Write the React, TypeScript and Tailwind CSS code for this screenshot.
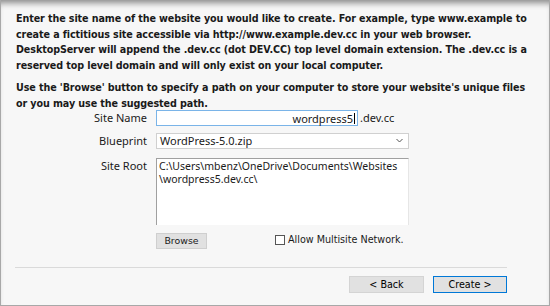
import React from 'react';

const ui = "font-['Noto_Sans',sans-serif]";
const verdana = "font-['DejaVu_Sans',sans-serif]";

export default function App() {
  return (
    <div className="w-[550px] h-[306px] bg-[#f7f7f7] border-x border-b border-[#a8a8a8] shadow-[inset_0_7px_6px_-4px_rgba(0,0,0,0.45)] flex flex-col overflow-hidden">
      <div className={`${verdana} px-[15px] pt-[11px] font-bold text-[9.6px] tracking-[-0.1px] leading-[15.5px] text-[#1a1a1a]`}>
        <p>
          Enter the site name of the website you would like to create. For example, type www.example to create a
          fictitious site accessible via http://www.example.dev.cc in your web browser. DesktopServer will append the
          .dev.cc (dot DEV.CC) top level domain extension. The .dev.cc is a reserved top level domain and will only
          exist on your local computer.
        </p>
        <p className="mt-[7px]">
          Use the 'Browse' button to specify a path on your computer to store your website's unique files or you may use
          the suggested path.
        </p>
      </div>

      <div className={`${ui} text-[11px] text-[#1a1a1a] grid grid-cols-[131px_1fr] gap-x-[9px] pl-[15px] mt-[-1px]`}>
        <label className="text-right leading-[16px]">Site Name</label>
        <div className="flex items-center gap-[2px]">
          <div className="w-[202px] h-[16px] border border-[#7ab4e8] bg-white flex items-center justify-end pr-[2px] leading-none">
            wordpress5<span className="w-px h-[11px] bg-black ml-px" />
          </div>
          <span>.dev.cc</span>
        </div>

        <label className="text-right leading-[16px] mt-[6px]">Blueprint</label>
        <div className="mt-[6px] w-[253px] h-[16px] border border-[#d0d0d0] bg-white flex items-center justify-between px-[3px] leading-none">
          <span>WordPress-5.0.zip</span>
          <svg width="7" height="5" viewBox="0 0 7 5" className="mr-[2px]">
            <path d="M0.5 1 L3.5 4 L6.5 1" fill="none" stroke="#555" strokeWidth="1" />
          </svg>
        </div>

        <label className="text-right leading-[16px] mt-[9px]">Site Root</label>
        <div className="mt-[9px] w-[253px] h-[67px] bg-white border-t border-l border-[#a0a0a0] border-r border-r-[#e6e6e6] px-[2px] pt-[1px] text-[10.5px] leading-[13px] whitespace-nowrap overflow-hidden">
          C:\Users\mbenz\OneDrive\Documents\Websites
          <br />
          \wordpress5.dev.cc\
        </div>

        <div />
        <div className="mt-[8px] flex items-center">
          <button className={`${verdana} w-[51px] h-[16px] bg-[#e1e1e1] border border-[#cfcfcf] text-[9.4px] leading-none`}>
            Browse
          </button>
          <label className={`${verdana} ml-[68px] flex items-center gap-[3px] text-[9.6px]`}>
            <span className="w-[10px] h-[10px] border border-[#555] bg-white" />
            Allow Multisite Network.
          </label>
        </div>
      </div>

      <div className="mt-auto ml-[14px] mr-[42px] border-t border-[#dadada]" />
      <div className={`${verdana} text-[9.6px] flex justify-end gap-[9px] pr-[42px] pt-[8px] pb-[12px]`}>
        <button className="w-[75px] h-[17px] bg-[#e1e1e1] border border-[#d4d4d4] leading-none">&lt; Back</button>
        <button className="w-[74px] h-[17px] bg-[#e1e1e1] border border-[#0078d7] leading-none">Create &gt;</button>
      </div>
    </div>
  );
}
